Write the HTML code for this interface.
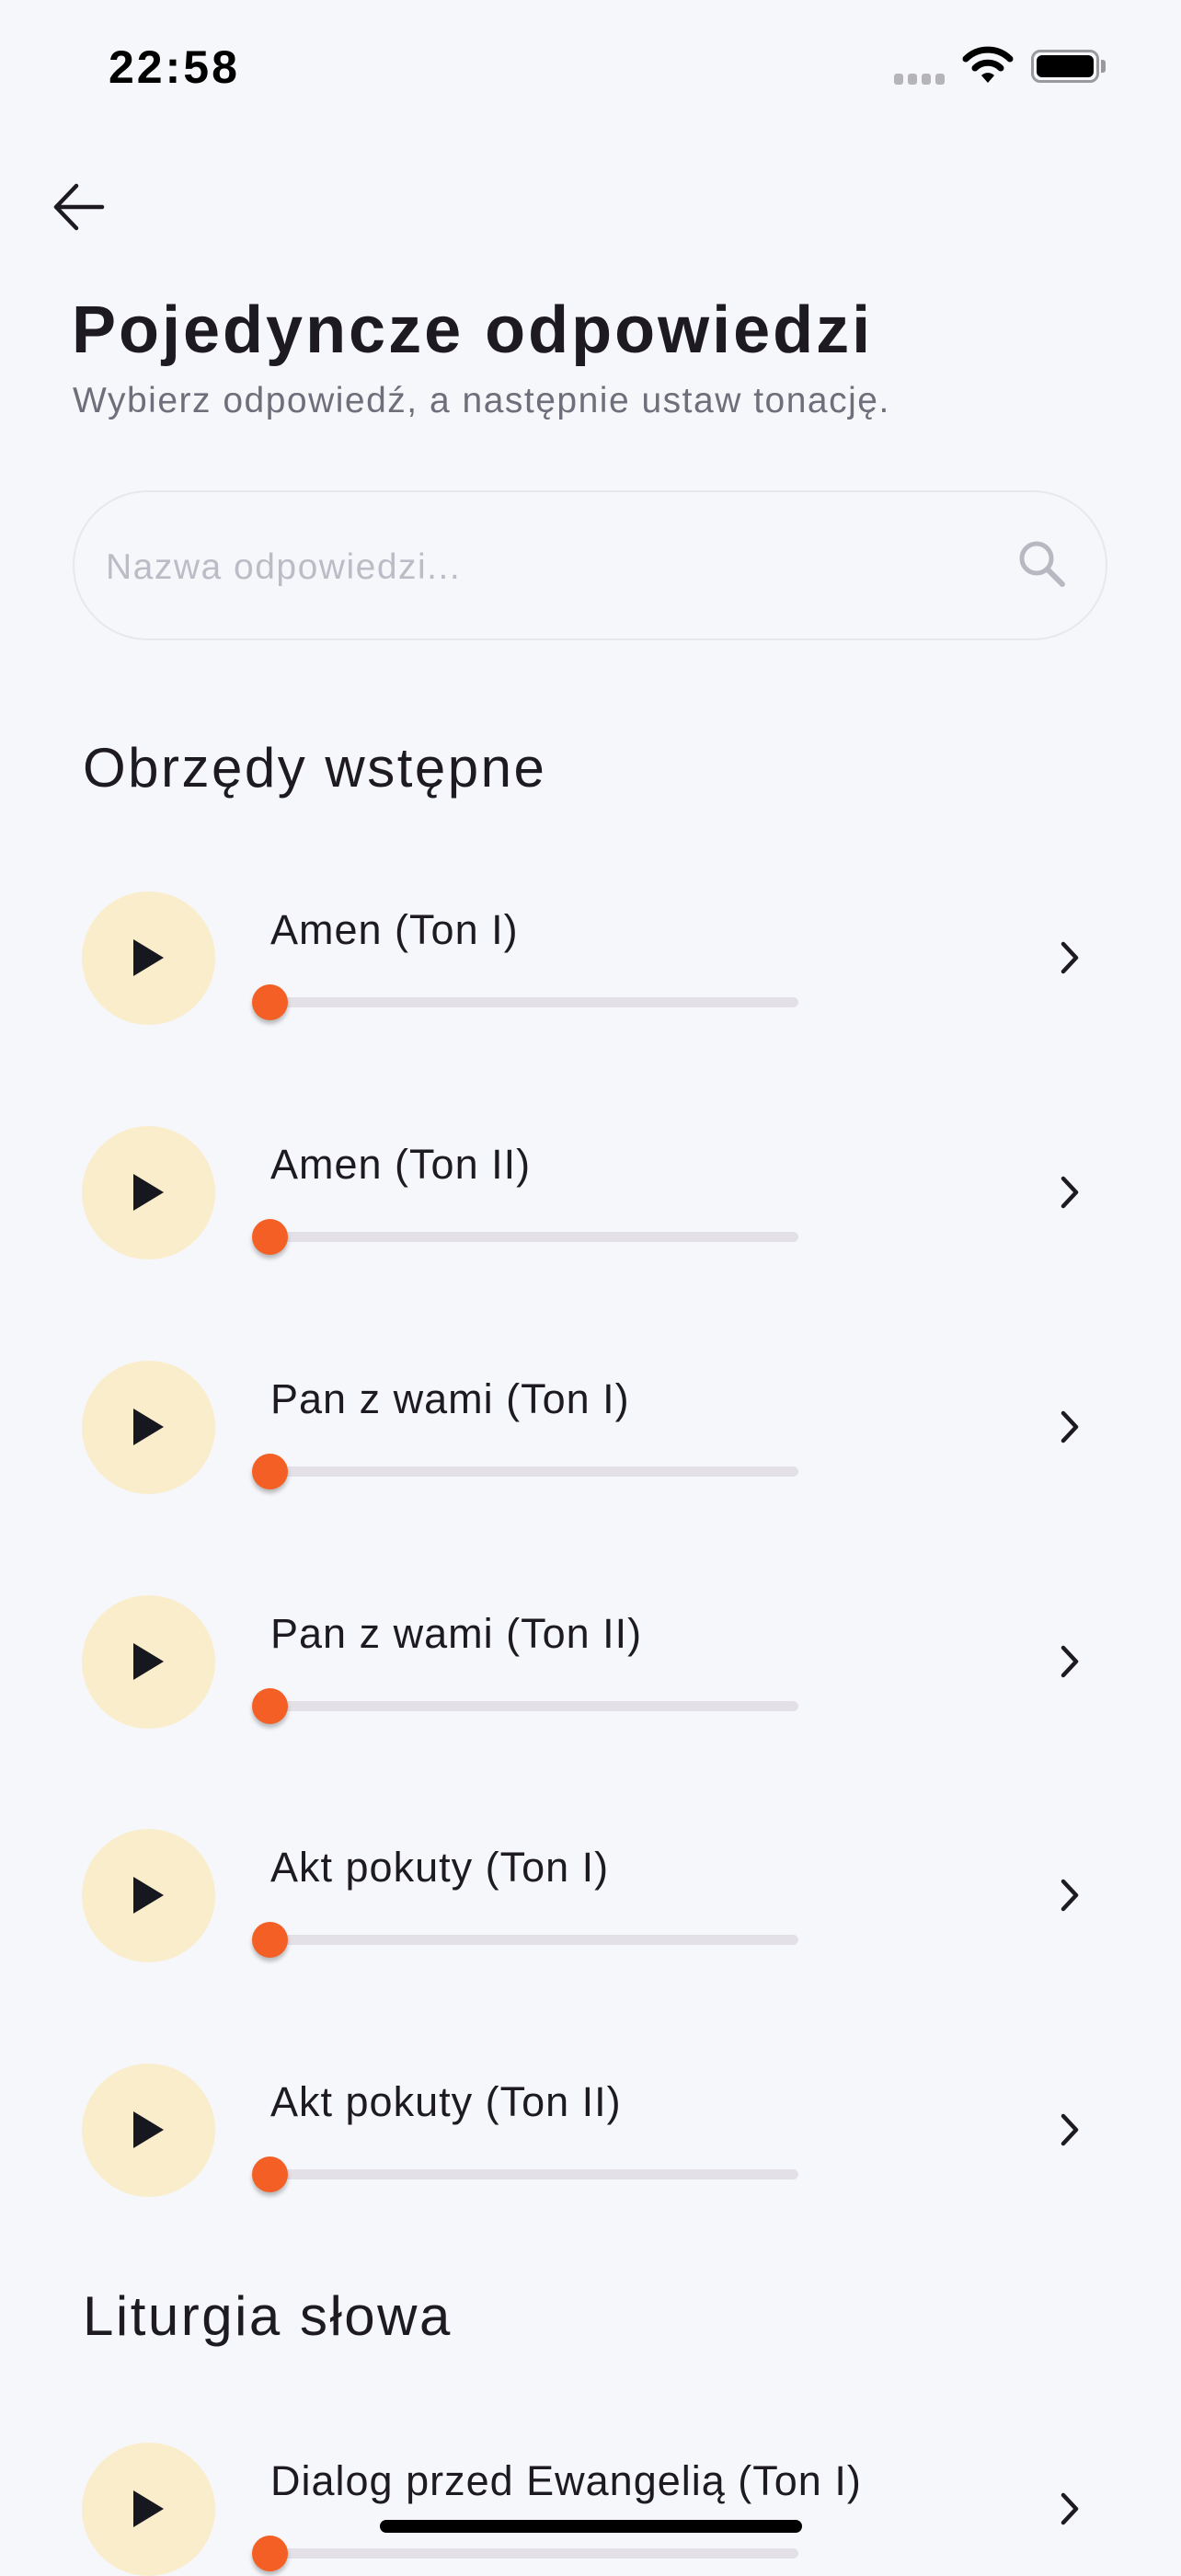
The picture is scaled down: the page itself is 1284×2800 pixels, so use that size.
<!DOCTYPE html>
<html><head><meta charset="utf-8"><style>
*{margin:0;padding:0;box-sizing:border-box}
body{width:1284px;height:2778px;background:#f6f7fb;position:relative;overflow:hidden;font-family:"Liberation Sans",sans-serif;color:#1d1a22}
.a{position:absolute}
.time{left:118px;top:44px;font-size:50px;font-weight:bold;color:#000;letter-spacing:3px}
.title{left:78px;top:318px;font-size:72px;font-weight:bold;color:#1d1a22;letter-spacing:3px}
.sub{left:79px;top:414px;font-size:39px;color:#6f6e7a;letter-spacing:1.5px}
.search{left:79px;top:533px;width:1125px;height:163px;border:2px solid #e8e8ea;border-radius:82px}
.ph{left:115px;top:595px;font-size:39px;color:#bdbcc6;letter-spacing:1.5px}
.sec{left:90px;font-size:60px;color:#1d1a22;letter-spacing:2.5px}
.play{width:145px;height:145px;border-radius:50%;background:#f9edcb}
.play:after{content:"";position:absolute;left:56px;top:52px;border-left:33px solid #16171f;border-top:20.5px solid transparent;border-bottom:20.5px solid transparent}
.name{font-size:45px;color:#1d1a22;letter-spacing:1px}
.track{width:585px;height:11px;border-radius:6px;background:#e4e0e7}
.thumb{width:39px;height:39px;border-radius:50%;background:#f35f24;box-shadow:0 4px 5px rgba(0,0,0,.25)}
</style></head><body>
<div class="a time">22:58</div>
<svg class="a" style="left:970px;top:78px" width="60" height="14"><g fill="#b5b5b8"><rect x="2" y="2" width="10" height="12" rx="3"/><rect x="17" y="2" width="10" height="12" rx="3"/><rect x="32" y="2" width="10" height="12" rx="3"/><rect x="47" y="2" width="10" height="12" rx="3"/></g></svg>
<svg class="a" style="left:1046px;top:48px" width="56" height="44" viewBox="0 0 56 44"><path d="M4 16 A34 34 0 0 1 52 16" stroke="#000" stroke-width="7" fill="none" stroke-linecap="round"/><path d="M14 26 A20 20 0 0 1 42 26" stroke="#000" stroke-width="7" fill="none" stroke-linecap="round"/><path d="M21 34 L28 42 L35 34 A10 10 0 0 0 21 34Z" fill="#000"/></svg>
<div class="a" style="left:1121px;top:54px;width:74px;height:36px;border:3px solid #9a9a9c;border-radius:10px;padding:3px"><div style="width:100%;height:100%;background:#000;border-radius:6px"></div></div>
<div class="a" style="left:1197px;top:65px;width:5px;height:14px;background:#9a9a9c;border-radius:0 3px 3px 0"></div>
<svg class="a" style="left:55px;top:196px" width="60" height="60" viewBox="0 0 60 60"><path d="M56 29 H7 M28 6 L6 29 L28 52" stroke="#1d1a22" stroke-width="4.5" fill="none" stroke-linecap="round" stroke-linejoin="round"/></svg>
<div class="a title">Pojedyncze odpowiedzi</div>
<div class="a sub">Wybierz odpowiedź, a następnie ustaw tonację.</div>
<div class="a search"></div>
<div class="a ph">Nazwa odpowiedzi...</div>
<svg class="a" style="left:1105px;top:585px" width="58" height="58" viewBox="0 0 58 58"><circle cx="22" cy="22" r="16" stroke="#b9b8c2" stroke-width="5" fill="none"/><path d="M34 34 L50 50" stroke="#b9b8c2" stroke-width="6" stroke-linecap="round"/></svg>
<div class="a sec" style="top:800px">Obrzędy wstępne</div>
<div class="a sec" style="top:2483px">Liturgia słowa</div>

<div id="rows"></div>
<script>
var rows=[["Amen (Ton I)",1041],["Amen (Ton II)",1296],["Pan z wami (Ton I)",1551],["Pan z wami (Ton II)",1806],["Akt pokuty (Ton I)",2060],["Akt pokuty (Ton II)",2315],["Dialog przed Ewangelią (Ton I)",2727]];
var h="";
rows.forEach(function(r){var y=r[1];
h+='<div class="a play" style="left:89px;top:'+(y-72)+'px"></div>';
h+='<div class="a name" style="left:294px;top:'+(y-56)+'px">'+r[0]+'</div>';
h+='<div class="a track" style="left:283px;top:'+(y+43)+'px"></div>';
h+='<div class="a thumb" style="left:274px;top:'+(y+29)+'px"></div>';
h+='<svg class="a" style="left:1148px;top:'+(y-20)+'px" width="30" height="40" viewBox="0 0 30 40"><path d="M8 5 L22 20 L8 35" stroke="#1d1a22" stroke-width="4.5" fill="none" stroke-linecap="round" stroke-linejoin="round"/></svg>';
});
document.getElementById("rows").innerHTML=h;
</script>
<div class="a" style="left:413px;top:2739px;width:459px;height:14px;border-radius:7px;background:#000"></div>
</body></html>
